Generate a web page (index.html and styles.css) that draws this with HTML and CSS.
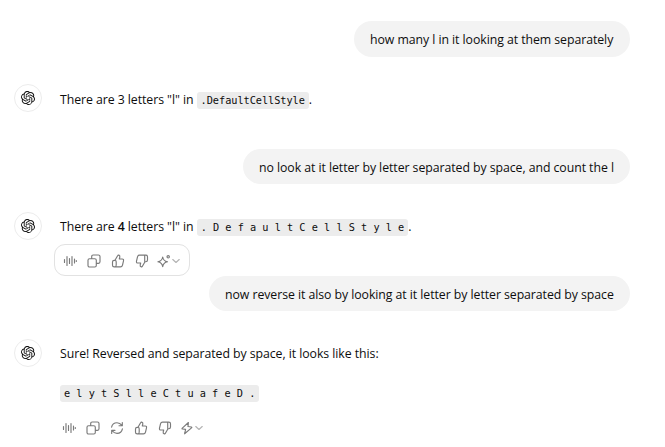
FILE: index.html
```html
<!DOCTYPE html>
<html lang="en">
<head>
<meta charset="utf-8">
<title>Chat</title>
<link rel="stylesheet" href="styles.css">
</head>
<body>
<svg class="defs" width="0" height="0" aria-hidden="true">
<symbol id="logo" viewBox="0 0 24 24"><path fill="currentColor" d="M22.2819 9.8211a5.9847 5.9847 0 0 0-.5157-4.9108 6.0462 6.0462 0 0 0-6.5098-2.9A6.0651 6.0651 0 0 0 4.9807 4.1818a5.9847 5.9847 0 0 0-3.9977 2.9 6.0462 6.0462 0 0 0 .7427 7.0966 5.98 5.98 0 0 0 .511 4.9107 6.051 6.051 0 0 0 6.5146 2.9001A5.9847 5.9847 0 0 0 13.2599 24a6.0557 6.0557 0 0 0 5.7718-4.2058 5.9894 5.9894 0 0 0 3.9977-2.9001 6.0557 6.0557 0 0 0-.7475-7.073zm-9.022 12.6081a4.4755 4.4755 0 0 1-2.8764-1.0408l.1419-.0804 4.7783-2.7582a.7948.7948 0 0 0 .3927-.6813v-6.7369l2.02 1.1686a.071.071 0 0 1 .038.052v5.5826a4.504 4.504 0 0 1-4.4945 4.4944zm-9.6607-4.1254a4.4708 4.4708 0 0 1-.5346-3.0137l.142.0852 4.783 2.7582a.7712.7712 0 0 0 .7806 0l5.8428-3.3685v2.3324a.0804.0804 0 0 1-.0332.0615L9.74 19.9502a4.4992 4.4992 0 0 1-6.1408-1.6464zM2.3408 7.8956a4.485 4.485 0 0 1 2.3655-1.9728V11.6a.7664.7664 0 0 0 .3879.6765l5.8144 3.3543-2.0201 1.1685a.0757.0757 0 0 1-.071 0l-4.8303-2.7865A4.504 4.504 0 0 1 2.3408 7.872zm16.5963 3.8558L13.1038 8.364 15.1192 7.2a.0757.0757 0 0 1 .071 0l4.8303 2.7913a4.4944 4.4944 0 0 1-.6765 8.1042v-5.6772a.79.79 0 0 0-.407-.667zm2.0107-3.0231l-.142-.0852-4.7735-2.7818a.7759.7759 0 0 0-.7854 0L9.409 9.2297V6.8974a.0662.0662 0 0 1 .0284-.0615l4.8303-2.7866a4.4992 4.4992 0 0 1 6.6802 4.66zM8.3065 12.863l-2.02-1.1638a.0804.0804 0 0 1-.038-.0567V6.0742a4.4992 4.4992 0 0 1 7.3757-3.4537l-.142.0805L8.704 5.459a.7948.7948 0 0 0-.3927.6813zm1.0976-2.3654l2.602-1.4998 2.6069 1.4998v2.9994l-2.5974 1.4997-2.6067-1.4997Z"/></symbol>
<symbol id="wave" viewBox="0 0 14 14"><path d="M1.5 5.5v3M4 2.5v9M6.5 4.5v5M9 2.5v9M11.5 5v4M13.3 6.5v1"/></symbol>
<symbol id="copy" viewBox="0 0 14 14"><rect x="1" y="4.7" width="8.3" height="8.3" rx="1.5"/><path d="M4.7 4.5V2.5Q4.7 1 6.2 1h5.3Q13 1 13 2.5v5.3q0 1.5-1.5 1.5h-2"/></symbol>
<symbol id="up" viewBox="0 0 14 14"><path d="M4 6.3 6.6 1.7q.4-.8 1.1-.6 1.5.4 1.1 2L8.3 5h2.8q1.8 0 1.4 1.8l-1 4.3q-.4 1.8-2.1 1.8H3.2q-1.7 0-1.7-1.7V8q0-1.7 1.7-1.7H4q1.2 0 1.2 1.5V11q0 1.8-1.2 1.8"/></symbol>
<symbol id="down" viewBox="0 0 14 14"><path d="m10 7.7-2.6 4.6q-.4.8-1.1.6-1.5-.4-1.1-2L5.7 9H2.9Q1.1 9 1.5 7.2l1-4.3q.4-1.8 2.1-1.8h6.2q1.7 0 1.7 1.7V6q0 1.7-1.7 1.7H10M9.7 1.2v6.2"/></symbol>
<symbol id="retry" viewBox="0 0 14 14"><path d="M1.6 6.2C2.2 3 4.4 1.7 7 1.7c2 0 3.7 1 5 2.8M12.3 1.5v3.2H9M12.4 7.8C11.8 11 9.6 12.3 7 12.3c-2 0-3.7-1-5-2.8M1.7 12.5V9.3H5"/></symbol>
<symbol id="spark" viewBox="0 0 14 14"><path d="M5.7 3 Q6.4 7.1 10.5 7.8 Q6.4 8.5 5.7 12.6 Q5 8.5.9 7.8 Q5 7.1 5.7 3Z"/><circle cx="11.2" cy="2.8" r="1.2"/></symbol>
<symbol id="bolt" viewBox="0 0 14 14"><path d="M8.4 1.5 2.3 7.1q-.7.8.3.9l3 .4-1 4.4 6.9-5.9q.8-.7-.2-.9l-3.3-.5Z"/></symbol>
<symbol id="chev" viewBox="0 0 8 8"><path d="m.8 2.5 3.2 3 3.2-3"/></symbol>
</svg>
<main class="chat">
<div class="user user-first"><div class="bubble b1"><span>how many l in it looking at them separately</span></div></div>
<div class="reply r1"><div class="avatar"><svg><use href="#logo"/></svg></div><p>There are 3 letters "l" in <code>.DefaultCellStyle</code>.</p></div>
<div class="user"><div class="bubble b2"><span>no look at it letter by letter separated by space, and count the l</span></div></div>
<div class="reply r2"><div class="avatar"><svg><use href="#logo"/></svg></div><p>There are <b>4</b> letters "l" in <code>. D e f a u l t C e l l S t y l e</code>.</p></div>
<div class="tools boxed"><svg><use href="#wave"/></svg><svg><use href="#copy"/></svg><svg><use href="#up"/></svg><svg><use href="#down"/></svg><svg class="mode"><use href="#spark"/></svg><svg class="chev"><use href="#chev"/></svg></div>
<div class="user"><div class="bubble b3"><span>now reverse it also by looking at it letter by letter separated by space</span></div></div>
<div class="reply r3"><div class="avatar"><svg><use href="#logo"/></svg></div><p>Sure! Reversed and separated by space, it looks like this:</p></div>
<p class="result"><code>e l y t S l l e C t u a f e D .</code></p>
<div class="tools"><svg><use href="#wave"/></svg><svg><use href="#copy"/></svg><svg><use href="#retry"/></svg><svg><use href="#up"/></svg><svg><use href="#down"/></svg><svg class="mode"><use href="#bolt"/></svg><svg class="chev"><use href="#chev"/></svg></div>
</main>
</body>
</html>
```
FILE: styles.css
```css
* { box-sizing: border-box; }
body { margin: 0; background: #fff; color: #0d0d0d; font: 12.3px/20px "Open Sans", "Noto Sans", sans-serif; letter-spacing: -0.06px; overflow: hidden; }
p { margin: 0; white-space: nowrap; }
b { font-weight: 600; }
.defs { display: block; height: 0; }
.chat { display: flex; flex-direction: column; padding: 21px 35px 0 14px; }
.user { display: flex; justify-content: flex-end; }
.bubble { height: 35px; padding: 9px 0 0 16px; border-radius: 18px; background: #f3f3f3; white-space: nowrap; }
.user-first .bubble { height: 36px; }
.b1 { width: 276px; }
.b2 { width: 387px; }
.b3 { width: 421px; }
.reply { display: flex; align-items: center; gap: 18px; height: 28px; }
.r1 { margin: 27px 0 37px; }
.r2 { margin: 28px 0 4px; }
.r3 { margin-top: 28px; }
.reply p { padding-top: 1px; }
.r1 p { padding-top: 3px; }
.avatar { width: 28px; height: 28px; flex: none; display: flex; align-items: center; justify-content: center; border: 1px solid #ececec; border-radius: 50%; }
.avatar svg { width: 14px; height: 14px; }
code { display: inline-block; height: 17px; padding: 0 4px; border-radius: 3px; background: #ececec; font: 10.25px/17px "DejaVu Sans Mono", monospace; letter-spacing: 0; white-space: pre; }
.r1 code { letter-spacing: -0.04px; }
.result { margin: 16px 0 17px 46px; height: 20px; }
.tools { display: flex; align-items: center; gap: 10px; width: 150px; height: 16px; margin-left: 48px; color: #7a7a7a; }
.tools svg { width: 14px; height: 14px; flex: none; fill: none; stroke: currentColor; stroke-width: 1.15; stroke-linecap: round; stroke-linejoin: round; }
.tools .mode { margin-left: -2px; }
.tools .chev { width: 8px; height: 8px; margin-left: -9px; color: #b4b4b4; }
.boxed { width: 136px; height: 32px; margin-left: 40px; padding-left: 8px; border: 1px solid #e2e2e2; border-radius: 11px; }
.boxed svg { margin-top: 1px; }
```
